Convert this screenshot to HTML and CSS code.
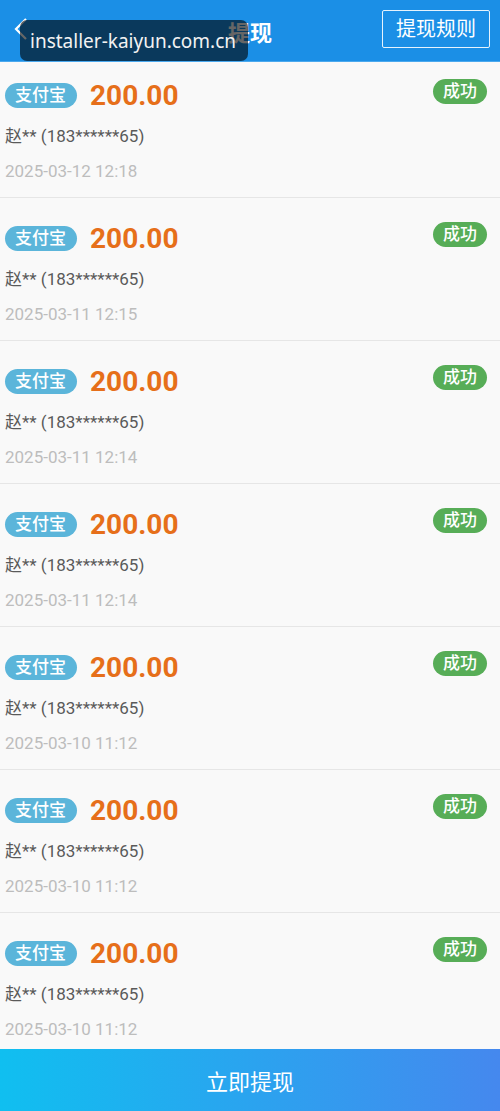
FILE: index.html
```html
<!DOCTYPE html>
<html>
<head>
  <meta charset="utf-8">
  <title>提现</title>
  <link rel="stylesheet" href="styles.css">
</head>
<body>
  <div class="header">
    <a class="back" href="#">
      <svg width="16" height="24" viewBox="0 0 16 24"><polyline points="13,2 3,12 13,22" fill="none" stroke="#fff" stroke-width="2.2"/></svg>
    </a>
    <div class="title">提现</div>
    <a class="rules" href="#">提现规则</a>
  </div>

  <div class="watermark">installer-kaiyun.com.cn</div>

  <div class="list">
    <div class="item">
      <div class="row">
        <span class="tag">支付宝</span>
        <span class="amount">200.00</span>
        <span class="status">成功</span>
      </div>
      <div class="name">赵** (183******65)</div>
      <div class="date">2025-03-12 12:18</div>
    </div>
    <div class="item">
      <div class="row">
        <span class="tag">支付宝</span>
        <span class="amount">200.00</span>
        <span class="status">成功</span>
      </div>
      <div class="name">赵** (183******65)</div>
      <div class="date">2025-03-11 12:15</div>
    </div>
    <div class="item">
      <div class="row">
        <span class="tag">支付宝</span>
        <span class="amount">200.00</span>
        <span class="status">成功</span>
      </div>
      <div class="name">赵** (183******65)</div>
      <div class="date">2025-03-11 12:14</div>
    </div>
    <div class="item">
      <div class="row">
        <span class="tag">支付宝</span>
        <span class="amount">200.00</span>
        <span class="status">成功</span>
      </div>
      <div class="name">赵** (183******65)</div>
      <div class="date">2025-03-11 12:14</div>
    </div>
    <div class="item">
      <div class="row">
        <span class="tag">支付宝</span>
        <span class="amount">200.00</span>
        <span class="status">成功</span>
      </div>
      <div class="name">赵** (183******65)</div>
      <div class="date">2025-03-10 11:12</div>
    </div>
    <div class="item">
      <div class="row">
        <span class="tag">支付宝</span>
        <span class="amount">200.00</span>
        <span class="status">成功</span>
      </div>
      <div class="name">赵** (183******65)</div>
      <div class="date">2025-03-10 11:12</div>
    </div>
    <div class="item">
      <div class="row">
        <span class="tag">支付宝</span>
        <span class="amount">200.00</span>
        <span class="status">成功</span>
      </div>
      <div class="name">赵** (183******65)</div>
      <div class="date">2025-03-10 11:12</div>
    </div>
  </div>

  <a class="submit" href="#">立即提现</a>
</body>
</html>
```

FILE: styles.css
```css
body {
  margin: 0;
  padding: 0;
  background-color: #F7F7F7;
  font-family: Roboto, "Noto Sans CJK SC", sans-serif;
  height: 1111px;
  overflow: hidden;
}

a {
  text-decoration: none;
  color: inherit;
}

.header {
  height: 61px;
  background-color: #1B8FE6;
  border-bottom: 1px solid #4BA9EE;
  display: flex;
  align-items: center;
  justify-content: center;
  position: relative;
  color: #FFFFFF;
}

.back {
  position: absolute;
  left: 13px;
  top: 17px;
  display: flex;
}

.title {
  font-size: 22px;
  font-weight: bold;
}

.rules {
  position: absolute;
  right: 10px;
  top: 10px;
  height: 36px;
  padding: 0 13px;
  border: 1.5px solid #E6F3FD;
  border-radius: 2px;
  font-size: 20px;
  line-height: 36px;
}

/* translucent address pill laid over the header */
.watermark {
  position: absolute;
  left: 20px;
  top: 20px;
  width: 218px;
  height: 41px;
  padding-left: 10px;
  background-color: rgba(0, 0, 0, 0.6);
  border-radius: 7px;
  color: #F2F2F2;
  font-family: "Noto Sans", sans-serif;
  font-size: 19px;
  line-height: 42px;
}

.item {
  height: 114px;
  padding: 28px 13px 0 5px;
  border-bottom: 1px solid #E6E6E6;
  background-color: #F9F9F9;
}

.item:first-child {
  padding-top: 21px;
}

.row {
  display: flex;
  align-items: center;
  height: 25px;
}

.tag {
  height: 25px;
  padding: 0 11px 0 10px;
  border-radius: 13px;
  background-color: #5BB5DA;
  color: #FFFFFF;
  font-size: 17px;
  font-weight: 500;
  line-height: 25px;
}

.amount {
  margin-left: 13px;
  color: #E66F1A;
  font-size: 28px;
  font-weight: bold;
  line-height: 25px;
}

.status {
  margin-left: auto;
  margin-top: -8px;
  height: 25px;
  padding: 0 10px;
  border-radius: 13px;
  background-color: #57AD57;
  color: #FFFFFF;
  font-size: 17px;
  font-weight: 500;
  line-height: 25px;
}

.name {
  margin-top: 16px;
  color: #5A5A5A;
  font-size: 17px;
  line-height: 24px;
}

.date {
  margin-top: 11px;
  color: #BDBDBD;
  font-size: 17px;
  line-height: 24px;
}

.submit {
  position: fixed;
  left: 0;
  right: 0;
  bottom: 0;
  height: 62px;
  background: linear-gradient(to right, #10BFF0, #4588EE);
  color: #FFFFFF;
  font-size: 22px;
  text-align: center;
  line-height: 68px;
}
```
